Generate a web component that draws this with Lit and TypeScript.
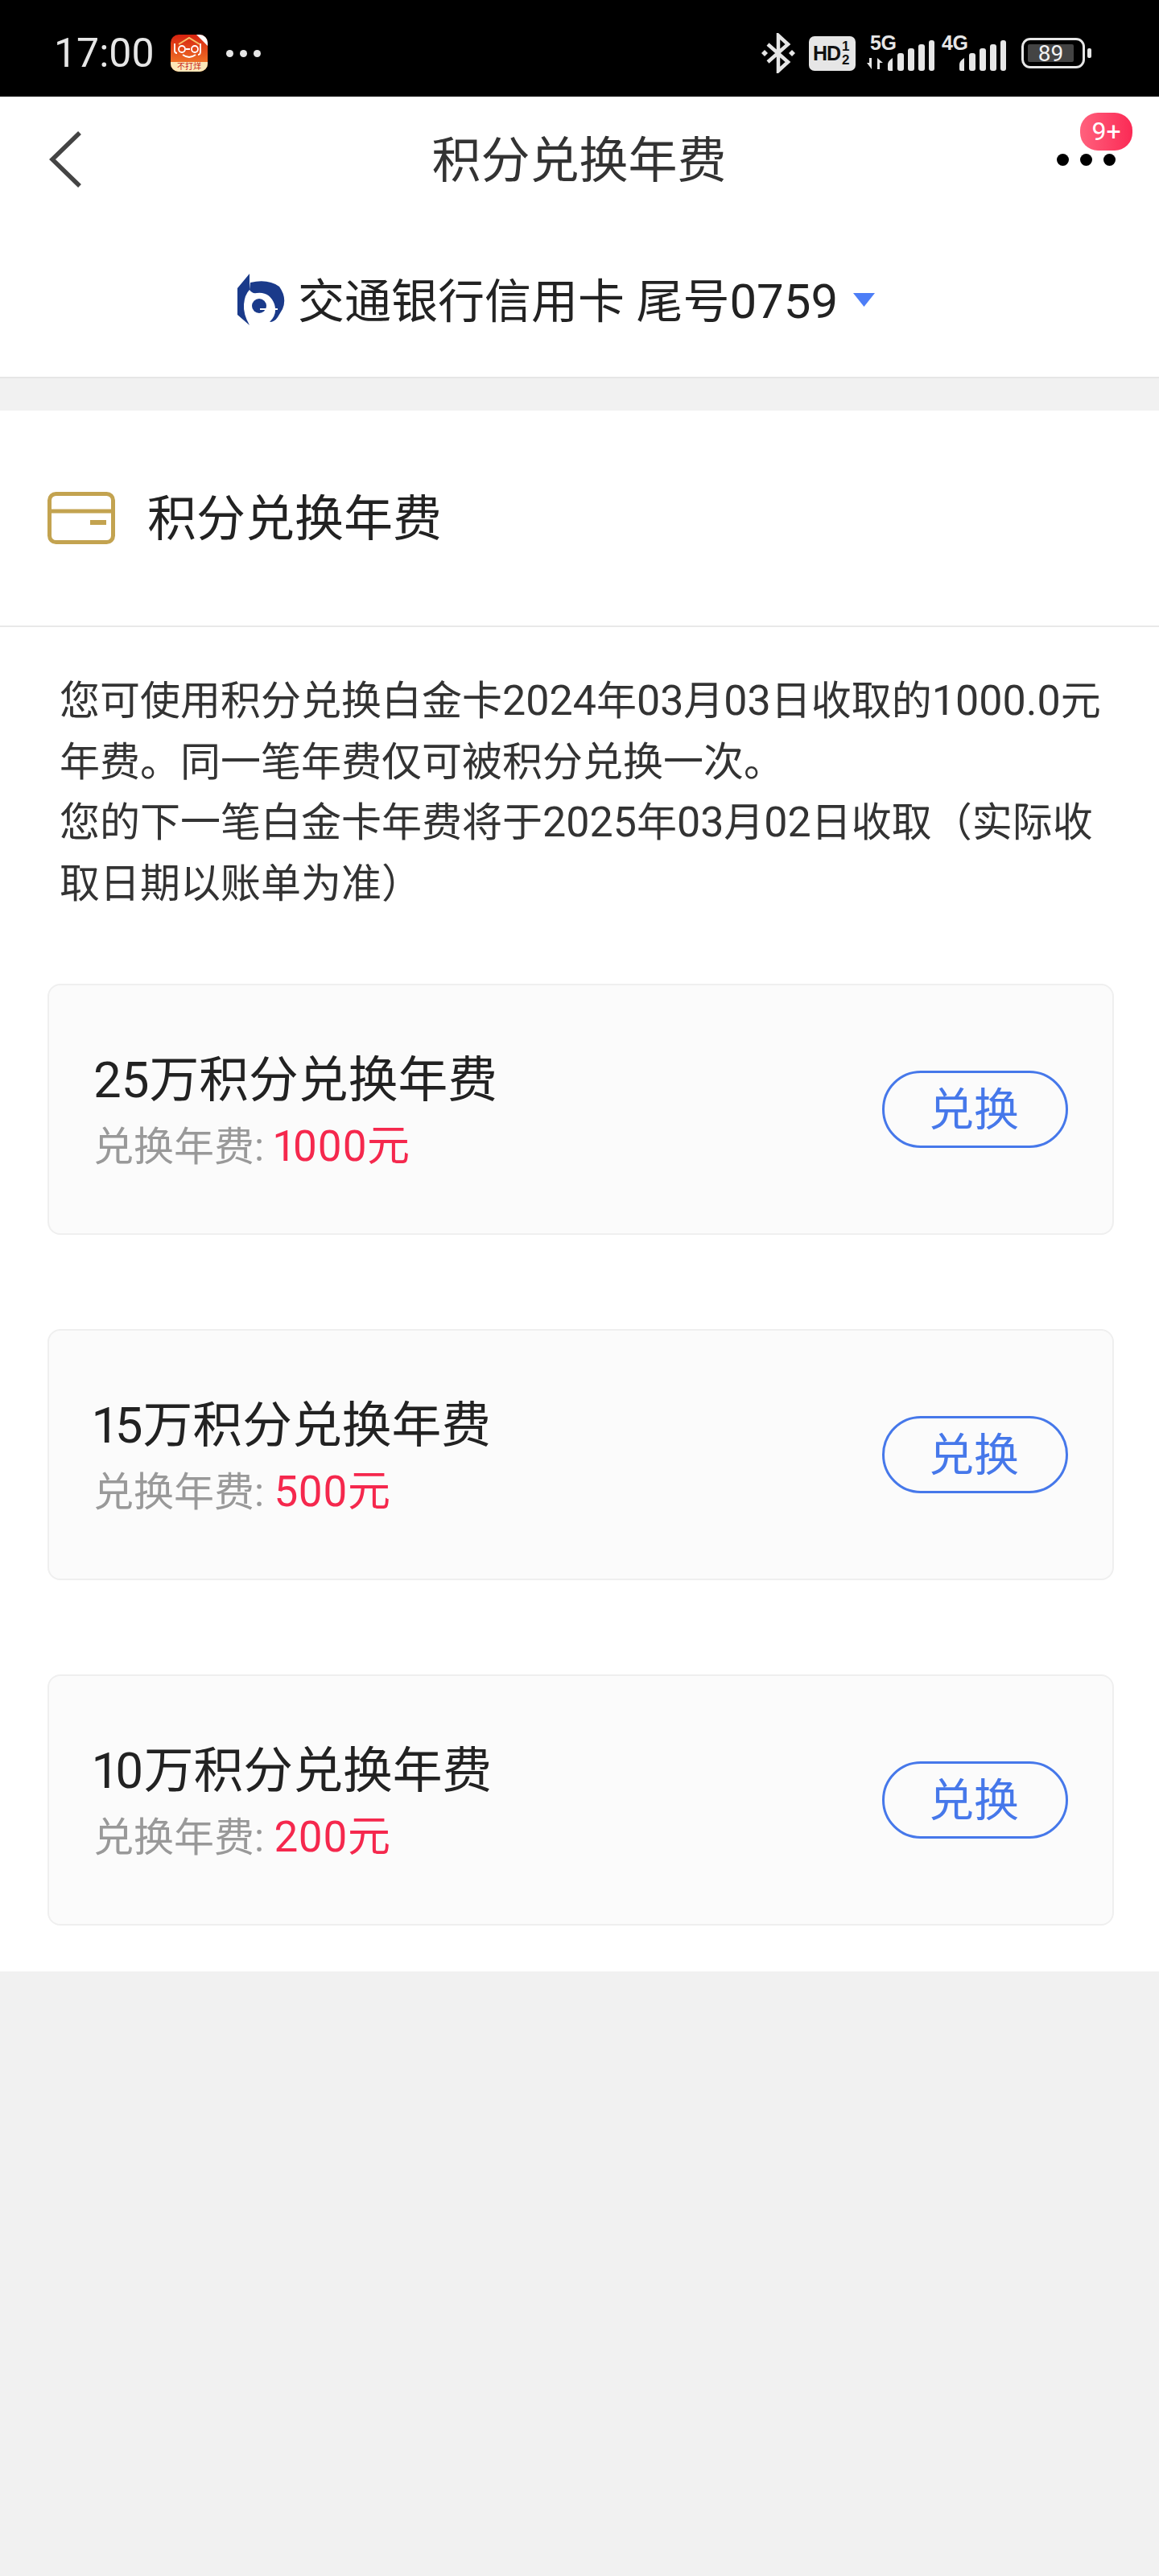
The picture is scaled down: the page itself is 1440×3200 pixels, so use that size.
import { LitElement, css, html, svg } from 'lit';
import { customElement } from 'lit/decorators.js';

const offers = [
	{ title: '25万积分兑换年费', fee: '1000元' },
	{ title: '15万积分兑换年费', fee: '500元' },
	{ title: '10万积分兑换年费', fee: '200元' },
];

// digits run a bit larger than the CJK text around them
const withDigits = (text: string) =>
	text.split(/(\d[\d.]*)/).map((part, i) => i % 2 ? html`<span class="num">${part}</span>` : part);

// signal bars, shared by the 5G and the 4G slot
const bars = svg`
	<path d="M2 30 q0-4 6-8 v16 h-4 q-2 0-2-2z" fill="#e6e6e6"/>
	<rect x="14" y="16" width="8" height="22" rx="3" fill="#e6e6e6"/>
	<rect x="27" y="10" width="8" height="28" rx="3" fill="#e6e6e6"/>
	<rect x="40" y="5" width="8" height="33" rx="3" fill="#e6e6e6"/>
	<rect x="53" y="0" width="7" height="38" rx="3" fill="#e6e6e6"/>
`;

@customElement('app-root')
export class AppRoot extends LitElement {
	static styles = css`
		:host {
			display: block;
			width: 1440px;
			min-height: 3200px;
			background: #f1f1f1;
			font-family: Roboto, 'Noto Sans CJK SC', sans-serif;
			color: #222;
		}
		.status {
			height: 120px;
			background: #000;
			display: flex;
			align-items: center;
			padding: 12px 0 0 67px;
			box-sizing: border-box;
			color: #e6e6e6;
		}
		.time { font-size: 50px; width: 145px; line-height: 1; }
		.app-icon { width: 46px; height: 46px; display: block; }
		.more-dots { display: flex; gap: 8px; margin-left: 23px; }
		.more-dots i { width: 9px; height: 9px; border-radius: 50%; background: #e6e6e6; }
		.status-right { margin-left: auto; display: flex; align-items: center; padding-right: 84px; }
		.bt { width: 46px; height: 50px; display: block; margin-right: 15px; }
		.hd {
			width: 58px; height: 43px;
			border-radius: 7px;
			background: #e6e6e6;
			color: #111;
			font: 700 25px/43px 'Liberation Sans', sans-serif;
			display: flex;
			align-items: center;
			padding-left: 5px;
			box-sizing: border-box;
			letter-spacing: -1px;
			margin-right: 14px;
		}
		.frac { display: flex; flex-direction: column; font-size: 17px; line-height: 17px; margin-left: 2px; letter-spacing: 0; }
		.sig { position: relative; width: 84px; height: 44px; }
		.sig b {
			position: absolute;
			left: 4px; top: -2px;
			font: 700 25px/22px 'Liberation Sans', sans-serif;
			letter-spacing: -0.5px;
		}
		.sig svg { position: absolute; right: 0; bottom: 0; width: 60px; height: 38px; }
		.sig .arrows { position: absolute; left: 0; bottom: 2px; width: 21px; height: 14px; }
		.sig.second { width: 80px; margin-left: 9px; margin-right: 19px; }
		.sig.second b { left: 0; }
		.battery {
			width: 79px; height: 38px;
			border: 3px solid #e6e6e6;
			border-radius: 11px;
			box-sizing: border-box;
			padding: 5px 11px 5px 5px;
			display: flex;
		}
		.battery span {
			flex: 1;
			background: #444;
			color: #f2f2f2;
			font-size: 28px;
			line-height: 23px;
			text-align: center;
			border-radius: 2px;
		}
		.battery-tip { width: 5px; height: 12px; border-radius: 2px; background: #e6e6e6; margin-left: 3px; }

		.top { background: #fff; }
		.nav {
			height: 156px;
			display: flex;
			align-items: center;
			justify-content: space-between;
			position: relative;
			padding: 0 54px 0 58px;
		}
		.back { width: 46px; height: 72px; display: block; }
		.title { font-size: 61px; line-height: 1; color: #333; margin: 4px 0 0 22px; }
		.more { display: flex; gap: 14px; position: relative; }
		.more i { width: 15px; height: 15px; border-radius: 50%; background: #000; }
		.badge {
			position: absolute;
			left: 29px;
			top: -51px;
			width: 65px;
			height: 47px;
			border-radius: 22px;
			background: linear-gradient(90deg, #ff617d, #fb2a55);
			color: #fff;
			font-size: 32px;
			line-height: 47px;
			text-align: center;
		}
		.selector {
			height: 192px;
			display: flex;
			align-items: center;
			padding-left: 295px;
			font-size: 58px;
			color: #222;
		}
		.selector > span { margin-bottom: 4px; }
		.selector .num { font-size: 60px; }
		.bank { width: 59px; height: 65px; display: block; margin-right: 16px; }
		.caret { width: 27px; height: 17px; display: block; margin-left: 19px; }
		.band { height: 40px; border-top: 2px solid #e6e6e6; }

		.section { background: #fff; padding-bottom: 57px; }
		.head {
			height: 267px;
			display: flex;
			align-items: center;
			padding-left: 59px;
			font-size: 61px;
			border-bottom: 2px solid #e9e9e9;
		}
		.head span { margin-bottom: 8px; }
		.wallet { width: 84px; height: 65px; display: block; margin-right: 40px; }
		.intro {
			margin: 0;
			padding: 55px 58px 0 74px;
			font-size: 50px;
			line-height: 75.5px;
			color: #333;
			white-space: nowrap;
		}
		.intro .num { font-size: 52px; line-height: 1; }
		.cards { display: flex; flex-direction: column; gap: 117px; padding: 86px 56px 0 59px; }
		.card {
			height: 312px;
			box-sizing: border-box;
			background: #fbfbfb;
			border: 2px solid #efefef;
			border-radius: 16px;
			display: flex;
			align-items: center;
			justify-content: space-between;
			padding: 0 55px 0 55px;
		}
		.card-text { padding-top: 4px; }
		.card-title { font-size: 61.8px; line-height: 84px; color: #222; font-feature-settings: 'pnum'; }
		.card-fee { font-size: 50px; line-height: 70px; color: #999; margin-top: 6px; }
		.card-fee em { font-style: normal; font-size: 53px; line-height: 1; color: #f5284d; font-feature-settings: 'pnum'; }
		.btn {
			width: 231px;
			height: 96px;
			box-sizing: border-box;
			border: 3px solid #4678ea;
			border-radius: 48px;
			color: #4678ea;
			font-size: 56px;
			line-height: 92px;
			text-align: center;
			text-indent: -3px;
		}
	`;

	renderStatus() {
		return html`
			<div class="status">
				<span class="time">17:00</span>
				<svg class="app-icon" viewBox="0 0 46 46">
					<defs>
						<linearGradient id="appg" x1="0" y1="0" x2="0" y2="1">
							<stop offset="0" stop-color="#d6220f"/>
							<stop offset="1" stop-color="#f78a2e"/>
						</linearGradient>
						<clipPath id="appc"><rect width="46" height="46" rx="10"/></clipPath>
					</defs>
					<g clip-path="url(#appc)">
						<rect width="46" height="46" fill="url(#appg)"/>
						<path d="M0 34 h46 v12 h-46z" fill="#fbe7b8"/>
						<path d="M32 0 h14 v14z" fill="#fff"/>
						<path d="M10 12 L23 4 L36 12" fill="none" stroke="#f7c46a" stroke-width="2"/>
						<g fill="none" stroke="#fff" stroke-width="1.8">
							<path d="M5 11 v9 q0 3 3 3"/>
							<circle cx="14" cy="18" r="4"/>
							<path d="M19 18 h5"/>
							<circle cx="30" cy="18" r="4"/>
							<path d="M37 11 v10 q0 4-3 4"/>
							<path d="M15 25 q8 6 16 0"/>
						</g>
						<text x="23" y="43" text-anchor="middle" font-size="10" fill="#c8251a" font-family="'Noto Sans CJK SC'">不打烊</text>
					</g>
				</svg>
				<div class="more-dots"><i></i><i></i><i></i></div>
				<div class="status-right">
					<svg class="bt" viewBox="0 0 46 50" fill="none" stroke="#e6e6e6" stroke-width="4.5">
						<path d="M10 14 L35 36 L23 47 V3 L35 14 L10 36"/>
						<path d="M2 25 l4-4 4 4-4 4z M36 25 l4-4 4 4-4 4z" fill="#e6e6e6" stroke="none"/>
					</svg>
					<div class="hd">HD<span class="frac"><span>1</span><span>2</span></span></div>
					<div class="sig">
						<b>5G</b>
						<svg class="arrows" viewBox="0 0 21 14" fill="#e6e6e6">
							<path d="M0 6 h3 v-6 h3 v14z M13 0 v14 h3 v-8 h4z"/>
						</svg>
						<svg viewBox="0 0 60 38">${bars}</svg>
					</div>
					<div class="sig second">
						<b>4G</b>
						<svg viewBox="0 0 60 38">${bars}</svg>
					</div>
					<div class="battery"><span>89</span></div>
					<div class="battery-tip"></div>
				</div>
			</div>
		`;
	}

	render() {
		return html`
			${this.renderStatus()}
			<div class="top">
				<div class="nav">
					<svg class="back" viewBox="0 0 46 72" fill="none" stroke="#444" stroke-width="5.5">
						<path d="M41 3 L7 36 L41 69"/>
					</svg>
					<span class="title">积分兑换年费</span>
					<div class="more">
						<i></i><i></i><i></i>
						<span class="badge">9+</span>
					</div>
				</div>
				<div class="selector">
					<svg class="bank" viewBox="0 0 59 65">
						<path d="M15 0 L0 18 V51 L15 64 Q7 50 8 38 Q9 26 15 20z" fill="#1a3a8a"/>
						<path d="M16 11 Q38 6 52 16 Q62 30 56 44 L50 54 Q46 60 40 60 Q50 50 46 38 Q40 22 24 24 Q18 25 15 20z" fill="#1a3a8a"/>
						<circle cx="27" cy="40" r="9" fill="#1a3a8a"/>
						<path d="M28 44 H50" stroke="#fff" stroke-width="2"/>
					</svg>
					<span>${withDigits('交通银行信用卡 尾号0759')}</span>
					<svg class="caret" viewBox="0 0 27 17"><path d="M0 0 H27 L13.5 17z" fill="#4d7ef7"/></svg>
				</div>
			</div>
			<div class="band"></div>
			<div class="section">
				<div class="head">
					<svg class="wallet" viewBox="0 0 84 65" fill="none" stroke="#c3a350" stroke-width="5">
						<rect x="2.5" y="2.5" width="79" height="60" rx="8"/>
						<path d="M2 24 H82"/>
						<path d="M53 38 H73" stroke-width="6"/>
					</svg>
					<span>积分兑换年费</span>
				</div>
				<p class="intro">${withDigits('您可使用积分兑换白金卡2024年03月03日收取的1000.0元')}<br>年费。同一笔年费仅可被积分兑换一次。<br>${withDigits('您的下一笔白金卡年费将于2025年03月02日收取（实际收')}<br>取日期以账单为准）</p>
				<div class="cards">
					${offers.map(o => html`
						<div class="card">
							<div class="card-text">
								<div class="card-title">${o.title}</div>
								<div class="card-fee">兑换年费: <em>${o.fee}</em></div>
							</div>
							<div class="btn">兑换</div>
						</div>
					`)}
				</div>
			</div>
		`;
	}
}

declare global {
	interface HTMLElementTagNameMap {
		'app-root': AppRoot
	}
}
